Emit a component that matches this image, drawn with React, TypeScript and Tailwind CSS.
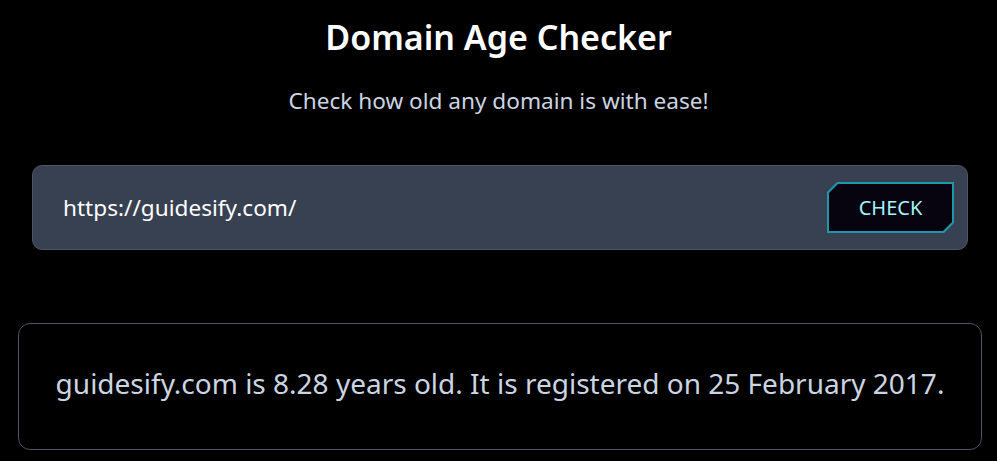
export default function App() {
  return (
    <div
      className="min-h-[461px] bg-black text-white"
      style={{ fontFamily: '"Noto Sans", "Open Sans", sans-serif' }}
    >
      <div className="flex flex-col pt-[14px]">
        <h1 className="text-center text-[34px] font-semibold leading-[46px] text-white">
          Domain Age Checker
        </h1>
        <p className="mt-[26px] text-center text-[22.6px] leading-[30px] text-[#cbd5e1]">
          Check how old any domain is with ease!
        </p>

        <div className="ml-8 mr-[29px] mt-[49px] flex h-[85px] items-center justify-between rounded-[10px] border border-[#4b5563] bg-[#374151] pl-[30px] pr-[13px]">
          <span className="text-[22.6px] text-white">https://guidesify.com/</span>
          <button className="h-[51px] w-[127px] bg-[#1e96ab] p-[2px] [clip-path:polygon(10px_0,100%_0,100%_calc(100%_-_10px),calc(100%_-_10px)_100%,0_100%,0_10px)]">
            <span className="flex h-full w-full items-center justify-center bg-[#07030f] text-[20px] text-[#a5f3fc] [clip-path:polygon(9px_0,100%_0,100%_calc(100%_-_9px),calc(100%_-_9px)_100%,0_100%,0_9px)]">
              CHECK
            </span>
          </button>
        </div>

        <div className="ml-[18px] mr-[15px] mt-[73px] flex h-[127px] items-center justify-center rounded-xl border border-[#4b5563] pb-2">
          <p className="text-[28px] text-[#cbd5e1]">
            guidesify.com is 8.28 years old. It is registered on 25 February 2017.
          </p>
        </div>
      </div>
    </div>
  );
}
